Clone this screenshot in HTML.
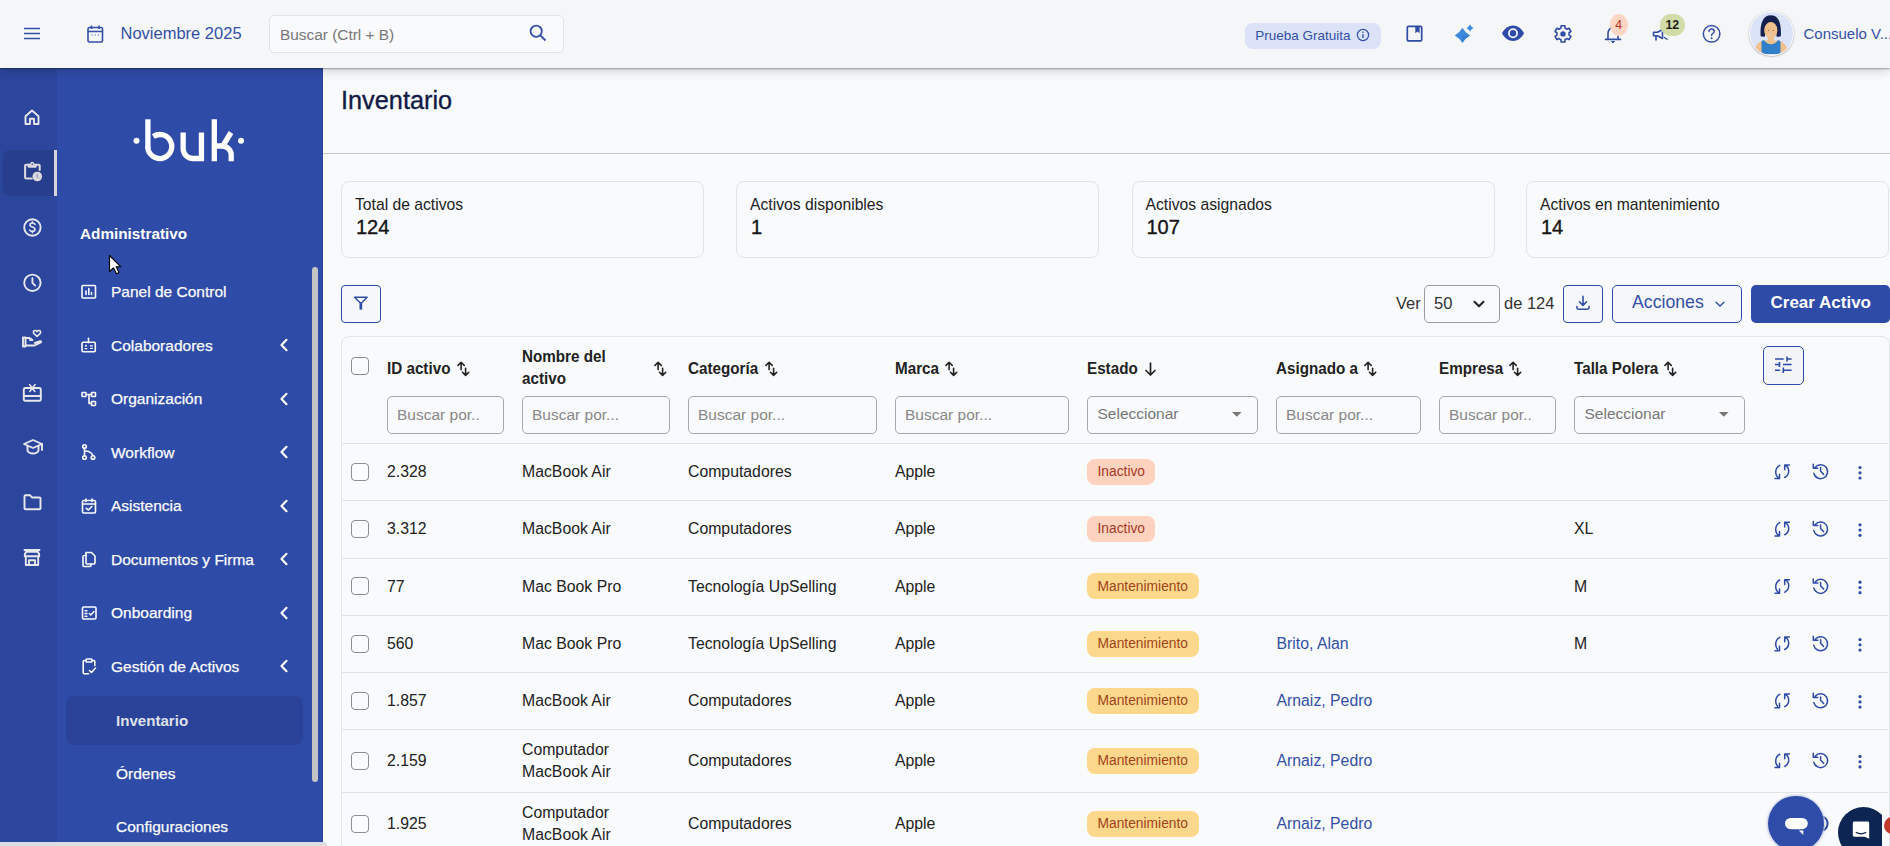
<!DOCTYPE html>
<html><head><meta charset="utf-8"><title>Inventario</title>
<style>
html,body{margin:0;padding:0;}
body{width:1890px;height:846px;overflow:hidden;position:relative;background:#f9fafc;font-family:"Liberation Sans",sans-serif;}
.t{position:absolute;white-space:nowrap;}
</style></head><body>
<div style="position:absolute;left:323px;top:68px;width:1567px;height:778px;background:#f9fafc;"></div>
<div class="t " style="left:341px;top:87.98px;font-size:25.3px;line-height:25.3px;color:#111a45;font-weight:400;-webkit-text-stroke:0.35px #111a45;">Inventario</div>
<div style="position:absolute;left:323px;top:153px;width:1567px;height:1px;background:#c5c6cb;"></div>
<div style="position:absolute;left:341px;top:181px;width:363.3px;height:76.5px;box-sizing:border-box;border:1px solid #e1e3e7;border-radius:8px;background:#f9fafc;"></div>
<div class="t " style="left:355px;top:196.71px;font-size:15.7px;line-height:15.7px;color:#222;font-weight:400;">Total de activos</div>
<div class="t " style="left:356px;top:217.07px;font-size:20px;line-height:20px;color:#151515;font-weight:400;-webkit-text-stroke:0.35px #151515;">124</div>
<div style="position:absolute;left:736px;top:181px;width:363.3px;height:76.5px;box-sizing:border-box;border:1px solid #e1e3e7;border-radius:8px;background:#f9fafc;"></div>
<div class="t " style="left:750px;top:196.71px;font-size:15.7px;line-height:15.7px;color:#222;font-weight:400;">Activos disponibles</div>
<div class="t " style="left:751px;top:217.07px;font-size:20px;line-height:20px;color:#151515;font-weight:400;-webkit-text-stroke:0.35px #151515;">1</div>
<div style="position:absolute;left:1131.5px;top:181px;width:363.3px;height:76.5px;box-sizing:border-box;border:1px solid #e1e3e7;border-radius:8px;background:#f9fafc;"></div>
<div class="t " style="left:1145.5px;top:196.71px;font-size:15.7px;line-height:15.7px;color:#222;font-weight:400;">Activos asignados</div>
<div class="t " style="left:1146.5px;top:217.07px;font-size:20px;line-height:20px;color:#151515;font-weight:400;-webkit-text-stroke:0.35px #151515;">107</div>
<div style="position:absolute;left:1526px;top:181px;width:363.3px;height:76.5px;box-sizing:border-box;border:1px solid #e1e3e7;border-radius:8px;background:#f9fafc;"></div>
<div class="t " style="left:1540px;top:196.71px;font-size:15.7px;line-height:15.7px;color:#222;font-weight:400;">Activos en mantenimiento</div>
<div class="t " style="left:1541px;top:217.07px;font-size:20px;line-height:20px;color:#151515;font-weight:400;-webkit-text-stroke:0.35px #151515;">14</div>
<div style="position:absolute;left:0px;top:0px;width:1890px;height:68px;background:#f5f6f8;box-shadow:0 1px 1.5px rgba(0,0,0,0.3),0 3px 10px rgba(0,0,0,0.16);z-index:5;"></div>
<div style="position:absolute;left:0;top:0;width:1890px;height:68px;z-index:6;">
<svg style="position:absolute;left:24px;top:27px;" width="17" height="13" viewBox="0 0 17 13" fill="none"><path d="M0 1.5H16M0 6.5H16M0 11.5H16" stroke="#3450a6" stroke-width="1.45"/></svg>
<svg style="position:absolute;left:86px;top:24px;" width="19" height="20" viewBox="0 0 19 20" fill="none"><rect x="2" y="3.5" width="14.5" height="14.5" rx="1.5" stroke="#3450a6" stroke-width="1.6"/><path d="M2 7.5H16.5M5.5 1.5V5M13 1.5V5" stroke="#3450a6" stroke-width="1.6"/><path d="M5.5 11H6.5M8.7 11H9.7M11.9 11H12.9" stroke="#3450a6" stroke-width="1.2"/></svg>
<div class="t " style="left:120.5px;top:25.33px;font-size:16.5px;line-height:16.5px;color:#3450a6;font-weight:400;">Noviembre 2025</div>
<div style="position:absolute;left:269px;top:15px;width:295px;height:37.6px;box-sizing:border-box;border:1px solid #e2e3e7;border-radius:5px;background:#f9fafc;"></div>
<div class="t " style="left:280px;top:26.66px;font-size:15.4px;line-height:15.4px;color:#777;font-weight:400;">Buscar (Ctrl + B)</div>
<svg style="position:absolute;left:529px;top:24px;" width="18" height="18" viewBox="0 0 18 18" fill="none"><circle cx="7.2" cy="7.2" r="5.6" stroke="#3450a6" stroke-width="1.8"/><path d="M11.3 11.3L16.5 16.5" stroke="#3450a6" stroke-width="1.9"/></svg>
</div>
<div style="position:absolute;left:0px;top:68px;width:57px;height:778px;background:#2b469c;"></div>
<div style="position:absolute;left:57px;top:68px;width:266px;height:778px;background:#2f4ba8;"></div>
<div style="position:absolute;left:322px;top:68px;width:1px;height:778px;background:#2a44a0;"></div>
<div style="position:absolute;left:0px;top:842px;width:327px;height:4px;background:#dcdde2;border-top-right-radius:3px;"></div>
<div style="position:absolute;left:3px;top:150px;width:51px;height:46px;background:#263e8c;border-radius:7px 0 0 7px;"></div>
<div style="position:absolute;left:54px;top:150px;width:3px;height:46px;background:#d6d6da;"></div>
<svg style="position:absolute;left:22px;top:107px;" width="20" height="20" viewBox="0 0 20 20" fill="none"><path d="M3.5 9.2L10 3.5L16.5 9.2V17H12V11.8H8V17H3.5Z" stroke="#e8e8ec" stroke-width="1.9" stroke-linecap="round" stroke-linejoin="round"/></svg>
<svg style="position:absolute;left:20px;top:160px;" width="25" height="25" viewBox="20 160 25 25" fill="none"><path d="M31.8 178.5H26.1Q25.1 178.5 25.1 177.5V165.8Q25.1 164.8 26.1 164.8H28M36.5 164.8H38.7Q39.7 164.8 39.7 165.8V170" stroke="#dcd9de" stroke-width="2.05" stroke-linecap="round"/><path d="M27.5 163.8H30Q30.5 161.8 32.2 161.8Q34 161.8 34.4 163.8H36.8V166.6Q36.8 167.7 35.8 167.7H28.5Q27.5 167.7 27.5 166.6Z" fill="#dcd9de"/><circle cx="32.3" cy="164.3" r="0.8" fill="#263e8c"/><circle cx="37.3" cy="176.5" r="4.8" fill="#dcd9de"/><path d="M37.1 173.9V176.8L38.6 178.4" stroke="#6d7fb8" stroke-width="0.9"/></svg>
<svg style="position:absolute;left:22px;top:217px;" width="21" height="21" viewBox="0 0 21 21" fill="none"><circle cx="10.4" cy="10.5" r="8.2" stroke="#e8e8ec" stroke-width="1.9" stroke-linecap="round" stroke-linejoin="round"/><path d="M13 7.3C12.6 6.5 11.7 6 10.5 6C9 6 8 6.8 8 8C8 10.6 13 9.5 13 12.3C13 13.5 11.9 14.4 10.4 14.4C9.1 14.4 8.1 13.8 7.7 13M10.4 4.8V6M10.4 14.4V15.8" stroke="#e8e8ec" stroke-width="1.6" stroke-linecap="round"/></svg>
<svg style="position:absolute;left:22px;top:272px;" width="21" height="21" viewBox="0 0 21 21" fill="none"><circle cx="10.4" cy="10.8" r="8.2" stroke="#e8e8ec" stroke-width="1.9" stroke-linecap="round" stroke-linejoin="round"/><path d="M10.4 6.3V10.8L13.2 13.6" stroke="#e8e8ec" stroke-width="1.9" stroke-linecap="round" stroke-linejoin="round"/></svg>
<svg style="position:absolute;left:21px;top:327px;" width="22" height="22" viewBox="0 0 22 22" fill="none"><path d="M2 10.5H4.5V19.5H2Z" stroke="#e8e8ec" stroke-width="1.9" stroke-linecap="round" stroke-linejoin="round"/><path d="M4.5 11H8.5L11.5 13H9M4.5 18.5H13.5L19.8 15.5C20.5 15 20 14 19.2 14.2L13.8 16" stroke="#e8e8ec" stroke-width="1.9" stroke-linecap="round" stroke-linejoin="round"/><path d="M16 9.5L13 6.6C12 5.6 12.2 4 13.5 3.6C14.4 3.3 15.4 3.8 16 4.6C16.6 3.8 17.6 3.3 18.5 3.6C19.8 4 20 5.6 19 6.6Z" stroke="#e8e8ec" stroke-width="1.6" stroke-linejoin="round"/></svg>
<svg style="position:absolute;left:22px;top:382px;" width="21" height="21" viewBox="0 0 21 21" fill="none"><rect x="1.8" y="6" width="17" height="12.8" rx="1.4" stroke="#e8e8ec" stroke-width="1.9" stroke-linecap="round" stroke-linejoin="round"/><path d="M1.8 14H18.8" stroke="#e8e8ec" stroke-width="1.9" stroke-linecap="round" stroke-linejoin="round"/><path d="M10.3 6L7.5 2.6M10.3 6L13.2 2.6M10.3 6L7.8 9.5M10.3 6L12.8 9.5" stroke="#e8e8ec" stroke-width="1.5" stroke-linecap="round"/></svg>
<svg style="position:absolute;left:22px;top:437px;" width="22" height="20" viewBox="0 0 22 20" fill="none"><path d="M2 7L11 3L20 7L11 11Z" stroke="#e8e8ec" stroke-width="1.9" stroke-linecap="round" stroke-linejoin="round"/><path d="M5.5 8.8V13.2C5.5 14.8 8 16.5 11 16.5C14 16.5 16.5 14.8 16.5 13.2V8.8M20 7V13" stroke="#e8e8ec" stroke-width="1.9" stroke-linecap="round" stroke-linejoin="round"/></svg>
<svg style="position:absolute;left:22px;top:492px;" width="21" height="20" viewBox="0 0 21 20" fill="none"><path d="M2.5 4.2C2.5 3.6 3 3.2 3.6 3.2H8L10 5.5H17.4C18 5.5 18.5 6 18.5 6.6V16.3C18.5 16.9 18 17.3 17.4 17.3H3.6C3 17.3 2.5 16.9 2.5 16.3Z" stroke="#e8e8ec" stroke-width="1.9" stroke-linecap="round" stroke-linejoin="round"/></svg>
<svg style="position:absolute;left:22px;top:547px;" width="20" height="21" viewBox="0 0 20 21" fill="none"><path d="M2.5 3H17.5M2.8 7.5L4 4.8H16L17.2 7.5V9.2H2.8Z" stroke="#e8e8ec" stroke-width="1.9" stroke-linecap="round" stroke-linejoin="round"/><path d="M3.8 9.5V18H16.2V9.5M7 18V13.2H13V18" stroke="#e8e8ec" stroke-width="1.9" stroke-linecap="round" stroke-linejoin="round"/></svg>
<svg style="position:absolute;left:120px;top:110px;" width="140" height="60" viewBox="120 110 140 60" fill="none"><g stroke="#fff" stroke-width="5.3" fill="none"><path d="M147.9 119.3V148.5"/><path d="M153.3 136.4A12 12 0 1 1 147.75 146.6"/><path d="M183.15 132.5V148.8A9.7 9.7 0 0 0 192.85 158.5H201.45M201.45 132.5V161.2"/><path d="M214.3 119.3V161.2M216 146H222A9.2 9.2 0 0 1 231.2 155.2V161.2M222.5 146.5L231 132.5"/></g><circle cx="136.5" cy="140.7" r="3" fill="#fff"/><circle cx="241" cy="140.8" r="3" fill="#fff"/></svg>
<div class="t " style="left:80px;top:226.45px;font-size:15.3px;line-height:15.3px;color:#fff;font-weight:700;">Administrativo</div>
<div class="t " style="left:111px;top:284.38px;font-size:15.5px;line-height:15.5px;color:#fbfbfd;font-weight:400;-webkit-text-stroke:0.25px #fbfbfd;">Panel de Control</div>
<div class="t " style="left:111px;top:337.88px;font-size:15.5px;line-height:15.5px;color:#fbfbfd;font-weight:400;-webkit-text-stroke:0.25px #fbfbfd;">Colaboradores</div>
<svg style="position:absolute;left:278px;top:338.0px;" width="12" height="14" viewBox="0 0 12 14" fill="none"><path d="M8.5 1.8L3.5 7L8.5 12.2" stroke="#fbfbfd" stroke-width="2.2" stroke-linecap="round" stroke-linejoin="round"/></svg>
<div class="t " style="left:111px;top:391.38px;font-size:15.5px;line-height:15.5px;color:#fbfbfd;font-weight:400;-webkit-text-stroke:0.25px #fbfbfd;">Organización</div>
<svg style="position:absolute;left:278px;top:391.5px;" width="12" height="14" viewBox="0 0 12 14" fill="none"><path d="M8.5 1.8L3.5 7L8.5 12.2" stroke="#fbfbfd" stroke-width="2.2" stroke-linecap="round" stroke-linejoin="round"/></svg>
<div class="t " style="left:111px;top:444.88px;font-size:15.5px;line-height:15.5px;color:#fbfbfd;font-weight:400;-webkit-text-stroke:0.25px #fbfbfd;">Workflow</div>
<svg style="position:absolute;left:278px;top:445.0px;" width="12" height="14" viewBox="0 0 12 14" fill="none"><path d="M8.5 1.8L3.5 7L8.5 12.2" stroke="#fbfbfd" stroke-width="2.2" stroke-linecap="round" stroke-linejoin="round"/></svg>
<div class="t " style="left:111px;top:498.38px;font-size:15.5px;line-height:15.5px;color:#fbfbfd;font-weight:400;-webkit-text-stroke:0.25px #fbfbfd;">Asistencia</div>
<svg style="position:absolute;left:278px;top:498.5px;" width="12" height="14" viewBox="0 0 12 14" fill="none"><path d="M8.5 1.8L3.5 7L8.5 12.2" stroke="#fbfbfd" stroke-width="2.2" stroke-linecap="round" stroke-linejoin="round"/></svg>
<div class="t " style="left:111px;top:551.88px;font-size:15.5px;line-height:15.5px;color:#fbfbfd;font-weight:400;-webkit-text-stroke:0.25px #fbfbfd;">Documentos y Firma</div>
<svg style="position:absolute;left:278px;top:552.0px;" width="12" height="14" viewBox="0 0 12 14" fill="none"><path d="M8.5 1.8L3.5 7L8.5 12.2" stroke="#fbfbfd" stroke-width="2.2" stroke-linecap="round" stroke-linejoin="round"/></svg>
<div class="t " style="left:111px;top:605.38px;font-size:15.5px;line-height:15.5px;color:#fbfbfd;font-weight:400;-webkit-text-stroke:0.25px #fbfbfd;">Onboarding</div>
<svg style="position:absolute;left:278px;top:605.5px;" width="12" height="14" viewBox="0 0 12 14" fill="none"><path d="M8.5 1.8L3.5 7L8.5 12.2" stroke="#fbfbfd" stroke-width="2.2" stroke-linecap="round" stroke-linejoin="round"/></svg>
<div class="t " style="left:111px;top:658.88px;font-size:15.5px;line-height:15.5px;color:#fbfbfd;font-weight:400;-webkit-text-stroke:0.25px #fbfbfd;">Gestión de Activos</div>
<svg style="position:absolute;left:278px;top:659.0px;" width="12" height="14" viewBox="0 0 12 14" fill="none"><path d="M8.5 1.8L3.5 7L8.5 12.2" stroke="#fbfbfd" stroke-width="2.2" stroke-linecap="round" stroke-linejoin="round"/></svg>
<svg style="position:absolute;left:80px;top:283px;" width="18" height="18" viewBox="0 0 18 18" fill="none"><rect x="2" y="2.5" width="13.5" height="12.5" rx="1" stroke="#fbfbfd" stroke-width="1.6" stroke-linecap="round" stroke-linejoin="round"/><path d="M6 11.5V8M8.8 11.5V5.5M11.5 11.5V9.5" stroke="#fbfbfd" stroke-width="1.6" stroke-linecap="round" stroke-linejoin="round"/></svg>
<svg style="position:absolute;left:80px;top:336px;" width="18" height="18" viewBox="0 0 18 18" fill="none"><rect x="2" y="6.2" width="13.3" height="9.6" rx="1.2" stroke="#fbfbfd" stroke-width="1.6" stroke-linecap="round" stroke-linejoin="round"/><path d="M8.5 2.3V6.8" stroke="#fbfbfd" stroke-width="1.6" stroke-linecap="round" stroke-linejoin="round"/><circle cx="5.9" cy="9.7" r="1" fill="#fbfbfd"/><path d="M4.5 12.6H7.3M10 9.9H12.8M10 12.3H12.8" stroke="#fbfbfd" stroke-width="1.3"/></svg>
<svg style="position:absolute;left:80px;top:390px;" width="18" height="18" viewBox="0 0 18 18" fill="none"><rect x="2" y="2.5" width="4" height="4" rx="0.6" stroke="#fbfbfd" stroke-width="1.6" stroke-linecap="round" stroke-linejoin="round"/><rect x="11.5" y="2.5" width="4" height="4" rx="0.6" stroke="#fbfbfd" stroke-width="1.6" stroke-linecap="round" stroke-linejoin="round"/><rect x="11.5" y="11.5" width="4" height="4" rx="0.6" stroke="#fbfbfd" stroke-width="1.6" stroke-linecap="round" stroke-linejoin="round"/><path d="M6 4.5H11.5M9 4.5V13.5H11.5" stroke="#fbfbfd" stroke-width="1.6" stroke-linecap="round" stroke-linejoin="round"/></svg>
<svg style="position:absolute;left:80px;top:443px;" width="18" height="18" viewBox="0 0 18 18" fill="none"><circle cx="4.5" cy="3.5" r="1.8" stroke="#fbfbfd" stroke-width="1.6" stroke-linecap="round" stroke-linejoin="round"/><circle cx="4.5" cy="14.5" r="1.8" stroke="#fbfbfd" stroke-width="1.6" stroke-linecap="round" stroke-linejoin="round"/><circle cx="13" cy="14.5" r="1.8" stroke="#fbfbfd" stroke-width="1.6" stroke-linecap="round" stroke-linejoin="round"/><path d="M4.5 5.3V12.7M4.5 8.5C6 7.5 11 8 13 12.5" stroke="#fbfbfd" stroke-width="1.6" stroke-linecap="round" stroke-linejoin="round"/></svg>
<svg style="position:absolute;left:80px;top:497px;" width="18" height="18" viewBox="0 0 18 18" fill="none"><rect x="2.5" y="3.5" width="13" height="12.5" rx="1.2" stroke="#fbfbfd" stroke-width="1.6" stroke-linecap="round" stroke-linejoin="round"/><path d="M2.5 7H15.5M6 2V4.5M12 2V4.5M6.3 11.3L8.3 13L11.8 9.5" stroke="#fbfbfd" stroke-width="1.6" stroke-linecap="round" stroke-linejoin="round"/></svg>
<svg style="position:absolute;left:80px;top:550px;" width="18" height="18" viewBox="0 0 18 18" fill="none"><path d="M6 5.5H4C3.4 5.5 3 5.9 3 6.5V15.5C3 16.1 3.4 16.5 4 16.5H10C10.6 16.5 11 16.1 11 15.5V14" stroke="#fbfbfd" stroke-width="1.6" stroke-linecap="round" stroke-linejoin="round"/><path d="M6 2.5H11.5L15 6V13C15 13.6 14.6 14 14 14H7C6.4 14 6 13.6 6 13Z" stroke="#fbfbfd" stroke-width="1.6" stroke-linecap="round" stroke-linejoin="round"/></svg>
<svg style="position:absolute;left:80px;top:604px;" width="18" height="18" viewBox="0 0 18 18" fill="none"><rect x="2.5" y="3" width="13.5" height="12" rx="1.2" stroke="#fbfbfd" stroke-width="1.6" stroke-linecap="round" stroke-linejoin="round"/><path d="M5 6.8H7M5 9.5H7M5 12.2H7M9.3 9.5L10.8 11L14 7.5" stroke="#fbfbfd" stroke-width="1.4" stroke-linecap="round"/></svg>
<svg style="position:absolute;left:80px;top:657px;" width="18" height="18" viewBox="0 0 18 18" fill="none"><path d="M6 3.5H4.2C3.6 3.5 3.2 3.9 3.2 4.5V15.8C3.2 16.4 3.6 16.8 4.2 16.8H8.5M12 3.5H13.8C14.4 3.5 14.8 3.9 14.8 4.5V8.5" stroke="#fbfbfd" stroke-width="1.6" stroke-linecap="round" stroke-linejoin="round"/><rect x="6" y="2" width="6" height="3" rx="0.8" stroke="#fbfbfd" stroke-width="1.6" stroke-linecap="round" stroke-linejoin="round"/><path d="M9.5 13.5L11.5 15.5L15.5 11" stroke="#fbfbfd" stroke-width="1.6" stroke-linecap="round" stroke-linejoin="round"/></svg>
<div style="position:absolute;left:66px;top:696px;width:237px;height:49px;background:#2a4399;border-radius:8px;"></div>
<div class="t " style="left:116px;top:712.51px;font-size:15.1px;line-height:15.1px;color:#dfe1ea;font-weight:700;">Inventario</div>
<div class="t " style="left:116px;top:766.08px;font-size:15.5px;line-height:15.5px;color:#fbfbfd;font-weight:400;-webkit-text-stroke:0.25px #fbfbfd;">Órdenes</div>
<div class="t " style="left:116px;top:818.98px;font-size:15.5px;line-height:15.5px;color:#fbfbfd;font-weight:400;-webkit-text-stroke:0.25px #fbfbfd;">Configuraciones</div>
<div style="position:absolute;left:312px;top:267px;width:6px;height:515px;background:#c4c4c7;border-radius:3px;"></div>
<div style="position:absolute;left:341px;top:285px;width:40px;height:38px;box-sizing:border-box;border:1px solid #2f4ba8;border-radius:4px;background:#f6f7fa;"></div>
<svg style="position:absolute;left:351px;top:294px;" width="20" height="20" viewBox="0 0 20 20" fill="none"><path d="M3.5 3.2H16.2L9.85 9.6Z" stroke="#2f4ba8" stroke-width="1.35" stroke-linejoin="round"/><path d="M8.5 9.3H11.2V15.6H8.5Z" fill="#2f4ba8"/></svg>
<div class="t " style="left:1396px;top:294.63px;font-size:16.5px;line-height:16.5px;color:#333;font-weight:400;">Ver</div>
<div style="position:absolute;left:1424px;top:285px;width:76px;height:38px;box-sizing:border-box;border:1px solid #9a9a9a;border-radius:5px;background:#f9fafc;"></div>
<div class="t " style="left:1434px;top:294.63px;font-size:16.5px;line-height:16.5px;color:#333;font-weight:400;">50</div>
<svg style="position:absolute;left:1472px;top:297px;" width="14" height="14" viewBox="0 0 14 14" fill="none"><path d="M2.5 4.8L7 9.2L11.5 4.8" stroke="#222" stroke-width="2" stroke-linecap="round" stroke-linejoin="round"/></svg>
<div class="t " style="left:1504px;top:294.63px;font-size:16.5px;line-height:16.5px;color:#333;font-weight:400;">de 124</div>
<div style="position:absolute;left:1563px;top:285px;width:40px;height:38px;box-sizing:border-box;border:1px solid #2f4ba8;border-radius:4px;background:#f6f7fa;"></div>
<svg style="position:absolute;left:1573px;top:294px;" width="20" height="20" viewBox="0 0 20 20" fill="none"><path d="M10 2.3V11.3M6.4 7.8L10 11.4L13.6 7.8M3.9 12.6V13.6Q3.9 15.2 5.5 15.2H14.5Q16.1 15.2 16.1 13.6V12.6" stroke="#2f4ba8" stroke-width="1.55" stroke-linecap="round" stroke-linejoin="round"/></svg>
<div style="position:absolute;left:1612px;top:285px;width:130px;height:38px;box-sizing:border-box;border:1px solid #2f4ba8;border-radius:5px;background:#f6f7fa;"></div>
<div class="t " style="left:1632px;top:293.81px;font-size:17.7px;line-height:17.7px;color:#3450a6;font-weight:400;">Acciones</div>
<svg style="position:absolute;left:1713px;top:297px;" width="14" height="14" viewBox="0 0 14 14" fill="none"><path d="M3 5.2L7 9L11 5.2" stroke="#3450a6" stroke-width="1.5" stroke-linecap="round" stroke-linejoin="round"/></svg>
<div style="position:absolute;left:1751px;top:285px;width:139px;height:38px;background:#2f4ba8;border-radius:5px;"></div>
<div class="t " style="left:1770.5px;top:294.41px;font-size:17px;line-height:17px;color:#fff;font-weight:700;">Crear Activo</div>
<div style="position:absolute;left:341px;top:336px;width:1548.5px;height:600px;box-sizing:border-box;border:1px solid #e3e5e9;border-radius:8px;background:#f9fafc;"></div>
<div style="position:absolute;left:351px;top:357px;width:18px;height:18px;box-sizing:border-box;border:1.3px solid #8e8e8e;border-radius:4px;background:#fafbfc;"></div>
<div class="t " style="left:387px;top:360.18px;font-size:16.2px;line-height:16.2px;color:#222;font-weight:700;transform:scaleX(0.94);transform-origin:0 0;">ID activo</div>
<svg style="position:absolute;left:457.4px;top:361px;" width="14" height="16" viewBox="0 0 14 16" fill="none"><path d="M4.1 8.6V1.4M1 4.4L4.1 1.3L7.2 4.4M8.6 7.2V14.4M5.5 11.3L8.6 14.4L11.7 11.3" stroke="#222" stroke-width="1.6" stroke-linecap="round" stroke-linejoin="round"/></svg>
<div class="t " style="left:522px;top:348.48px;font-size:16.2px;line-height:16.2px;color:#222;font-weight:700;transform:scaleX(0.94);transform-origin:0 0;">Nombre del</div>
<div class="t " style="left:522px;top:370.28px;font-size:16.2px;line-height:16.2px;color:#222;font-weight:700;transform:scaleX(0.94);transform-origin:0 0;">activo</div>
<svg style="position:absolute;left:654.2px;top:361px;" width="14" height="16" viewBox="0 0 14 16" fill="none"><path d="M4.1 8.6V1.4M1 4.4L4.1 1.3L7.2 4.4M8.6 7.2V14.4M5.5 11.3L8.6 14.4L11.7 11.3" stroke="#222" stroke-width="1.6" stroke-linecap="round" stroke-linejoin="round"/></svg>
<div class="t " style="left:688px;top:360.18px;font-size:16.2px;line-height:16.2px;color:#222;font-weight:700;transform:scaleX(0.94);transform-origin:0 0;">Categoría</div>
<svg style="position:absolute;left:764.8px;top:361px;" width="14" height="16" viewBox="0 0 14 16" fill="none"><path d="M4.1 8.6V1.4M1 4.4L4.1 1.3L7.2 4.4M8.6 7.2V14.4M5.5 11.3L8.6 14.4L11.7 11.3" stroke="#222" stroke-width="1.6" stroke-linecap="round" stroke-linejoin="round"/></svg>
<div class="t " style="left:895px;top:360.18px;font-size:16.2px;line-height:16.2px;color:#222;font-weight:700;transform:scaleX(0.94);transform-origin:0 0;">Marca</div>
<svg style="position:absolute;left:944.7px;top:361px;" width="14" height="16" viewBox="0 0 14 16" fill="none"><path d="M4.1 8.6V1.4M1 4.4L4.1 1.3L7.2 4.4M8.6 7.2V14.4M5.5 11.3L8.6 14.4L11.7 11.3" stroke="#222" stroke-width="1.6" stroke-linecap="round" stroke-linejoin="round"/></svg>
<div class="t " style="left:1087px;top:360.18px;font-size:16.2px;line-height:16.2px;color:#222;font-weight:700;transform:scaleX(0.94);transform-origin:0 0;">Estado</div>
<svg style="position:absolute;left:1143px;top:361px;" width="16" height="16" viewBox="0 0 16 16" fill="none"><path d="M7.5 2V14M3 9.5L7.5 14L12 9.5" stroke="#222" stroke-width="1.7" stroke-linecap="round" stroke-linejoin="round"/></svg>
<div class="t " style="left:1276px;top:360.18px;font-size:16.2px;line-height:16.2px;color:#222;font-weight:700;transform:scaleX(0.94);transform-origin:0 0;">Asignado a</div>
<svg style="position:absolute;left:1364px;top:361px;" width="14" height="16" viewBox="0 0 14 16" fill="none"><path d="M4.1 8.6V1.4M1 4.4L4.1 1.3L7.2 4.4M8.6 7.2V14.4M5.5 11.3L8.6 14.4L11.7 11.3" stroke="#222" stroke-width="1.6" stroke-linecap="round" stroke-linejoin="round"/></svg>
<div class="t " style="left:1439px;top:360.18px;font-size:16.2px;line-height:16.2px;color:#222;font-weight:700;transform:scaleX(0.94);transform-origin:0 0;">Empresa</div>
<svg style="position:absolute;left:1508.7px;top:361px;" width="14" height="16" viewBox="0 0 14 16" fill="none"><path d="M4.1 8.6V1.4M1 4.4L4.1 1.3L7.2 4.4M8.6 7.2V14.4M5.5 11.3L8.6 14.4L11.7 11.3" stroke="#222" stroke-width="1.6" stroke-linecap="round" stroke-linejoin="round"/></svg>
<div class="t " style="left:1574px;top:360.18px;font-size:16.2px;line-height:16.2px;color:#222;font-weight:700;transform:scaleX(0.94);transform-origin:0 0;">Talla Polera</div>
<svg style="position:absolute;left:1663.6px;top:361px;" width="14" height="16" viewBox="0 0 14 16" fill="none"><path d="M4.1 8.6V1.4M1 4.4L4.1 1.3L7.2 4.4M8.6 7.2V14.4M5.5 11.3L8.6 14.4L11.7 11.3" stroke="#222" stroke-width="1.6" stroke-linecap="round" stroke-linejoin="round"/></svg>
<div style="position:absolute;left:387px;top:396px;width:117px;height:37.5px;box-sizing:border-box;border:1px solid #a8a8a8;border-radius:5px;background:#f9fafc;overflow:hidden;"></div>
<div class="t" style="left:397px;top:407.38px;width:99px;overflow:hidden;font-size:15.5px;line-height:15.5px;color:#888;">Buscar por..</div>
<div style="position:absolute;left:522px;top:396px;width:148px;height:37.5px;box-sizing:border-box;border:1px solid #a8a8a8;border-radius:5px;background:#f9fafc;overflow:hidden;"></div>
<div class="t" style="left:532px;top:407.38px;width:130px;overflow:hidden;font-size:15.5px;line-height:15.5px;color:#888;">Buscar por...</div>
<div style="position:absolute;left:688px;top:396px;width:189px;height:37.5px;box-sizing:border-box;border:1px solid #a8a8a8;border-radius:5px;background:#f9fafc;overflow:hidden;"></div>
<div class="t" style="left:698px;top:407.38px;width:171px;overflow:hidden;font-size:15.5px;line-height:15.5px;color:#888;">Buscar por...</div>
<div style="position:absolute;left:895px;top:396px;width:174px;height:37.5px;box-sizing:border-box;border:1px solid #a8a8a8;border-radius:5px;background:#f9fafc;overflow:hidden;"></div>
<div class="t" style="left:905px;top:407.38px;width:156px;overflow:hidden;font-size:15.5px;line-height:15.5px;color:#888;">Buscar por...</div>
<div style="position:absolute;left:1087px;top:396px;width:171px;height:37.5px;box-sizing:border-box;border:1px solid #a8a8a8;border-radius:5px;background:#f9fafc;overflow:hidden;"></div>
<div class="t " style="left:1097.5px;top:406.38px;font-size:15.5px;line-height:15.5px;color:#777;font-weight:400;">Seleccionar</div>
<svg style="position:absolute;left:1231px;top:410px;" width="12" height="8" viewBox="0 0 12 8" fill="none"><path d="M1 2H10.6L5.8 6.8Z" fill="#777"/></svg>
<div style="position:absolute;left:1276px;top:396px;width:145px;height:37.5px;box-sizing:border-box;border:1px solid #a8a8a8;border-radius:5px;background:#f9fafc;overflow:hidden;"></div>
<div class="t" style="left:1286px;top:407.38px;width:127px;overflow:hidden;font-size:15.5px;line-height:15.5px;color:#888;">Buscar por...</div>
<div style="position:absolute;left:1439px;top:396px;width:117px;height:37.5px;box-sizing:border-box;border:1px solid #a8a8a8;border-radius:5px;background:#f9fafc;overflow:hidden;"></div>
<div class="t" style="left:1449px;top:407.38px;width:99px;overflow:hidden;font-size:15.5px;line-height:15.5px;color:#888;">Buscar por..</div>
<div style="position:absolute;left:1574px;top:396px;width:171px;height:37.5px;box-sizing:border-box;border:1px solid #a8a8a8;border-radius:5px;background:#f9fafc;overflow:hidden;"></div>
<div class="t " style="left:1584.5px;top:406.38px;font-size:15.5px;line-height:15.5px;color:#777;font-weight:400;">Seleccionar</div>
<svg style="position:absolute;left:1718px;top:410px;" width="12" height="8" viewBox="0 0 12 8" fill="none"><path d="M1 2H10.6L5.8 6.8Z" fill="#777"/></svg>
<div style="position:absolute;left:1763px;top:346px;width:41px;height:39px;box-sizing:border-box;border:1.3px solid #2f4ba8;border-radius:5px;background:#f3f4f8;"></div>
<svg style="position:absolute;left:1773px;top:354px;" width="22" height="22" viewBox="0 0 22 22" fill="none"><path d="M2 5H10.7M14 5H18.6M14 2.5V7.5M2 10.5H6.5M6.5 8V13M10 10.5H18.6M2 16.3H7.1M10.3 16.3H18.6M10.3 13.5V19" stroke="#2f4ba8" stroke-width="1.6"/></svg>
<div style="position:absolute;left:342px;top:443px;width:1546px;height:1px;background:#e1e3e7;"></div>
<div style="position:absolute;left:342px;top:500px;width:1546px;height:1px;background:#e1e3e7;"></div>
<div style="position:absolute;left:342px;top:558px;width:1546px;height:1px;background:#e1e3e7;"></div>
<div style="position:absolute;left:342px;top:615px;width:1546px;height:1px;background:#e1e3e7;"></div>
<div style="position:absolute;left:342px;top:672px;width:1546px;height:1px;background:#e1e3e7;"></div>
<div style="position:absolute;left:342px;top:729px;width:1546px;height:1px;background:#e1e3e7;"></div>
<div style="position:absolute;left:342px;top:792px;width:1546px;height:1px;background:#e1e3e7;"></div>
<div style="position:absolute;left:351px;top:462.75px;width:18px;height:18px;box-sizing:border-box;border:1.3px solid #8e8e8e;border-radius:4px;background:#fafbfc;"></div>
<div class="t " style="left:387px;top:463.87px;font-size:15.8px;line-height:15.8px;color:#222;font-weight:400;">2.328</div>
<div class="t " style="left:522px;top:463.87px;font-size:15.8px;line-height:15.8px;color:#222;font-weight:400;">MacBook Air</div>
<div class="t " style="left:688px;top:463.87px;font-size:15.8px;line-height:15.8px;color:#222;font-weight:400;">Computadores</div>
<div class="t " style="left:895px;top:463.87px;font-size:15.8px;line-height:15.8px;color:#222;font-weight:400;">Apple</div>
<div style="position:absolute;left:1087px;top:458.75px;width:67.5px;height:26px;background:#fdd3c0;border-radius:8px;"></div>
<div class="t " style="left:1097.5px;top:465.07px;font-size:13.8px;line-height:13.8px;color:#a43a1e;font-weight:400;">Inactivo</div>
<svg style="position:absolute;left:1771px;top:460px;" width="22" height="22" viewBox="0 0 22 22" fill="none"><g transform="translate(0 0.00)"><path d="M8.7 5.3A7.7 7.7 0 0 0 8.4 18.6M8.5 14.2V18.6H4M13.7 17.5A7 7 0 0 0 14 5M13.7 9.7V5H18.4" stroke="#2f4ba8" stroke-width="1.5" stroke-linecap="round" stroke-linejoin="round"/></g></svg>
<svg style="position:absolute;left:1810px;top:460px;" width="22" height="22" viewBox="0 0 22 22" fill="none"><g transform="translate(0 0.00)"><path d="M3.8 13.3A7 7 0 1 0 5.2 7.2M3.3 4.2V8.3H7.8" stroke="#2f4ba8" stroke-width="1.5" stroke-linecap="round" stroke-linejoin="round"/><path d="M10.6 7.8V11.1L13.6 14.4" stroke="#2f4ba8" stroke-width="1.5" stroke-linecap="round" stroke-linejoin="round"/></g></svg>
<svg style="position:absolute;left:1855px;top:460px;" width="10" height="22" viewBox="0 0 10 22" fill="none"><circle cx="5" cy="7.50" r="1.6" fill="#2f4ba8"/><circle cx="5" cy="12.80" r="1.6" fill="#2f4ba8"/><circle cx="5" cy="18.00" r="1.6" fill="#2f4ba8"/></svg>
<div style="position:absolute;left:351px;top:520.05px;width:18px;height:18px;box-sizing:border-box;border:1.3px solid #8e8e8e;border-radius:4px;background:#fafbfc;"></div>
<div class="t " style="left:387px;top:521.17px;font-size:15.8px;line-height:15.8px;color:#222;font-weight:400;">3.312</div>
<div class="t " style="left:522px;top:521.17px;font-size:15.8px;line-height:15.8px;color:#222;font-weight:400;">MacBook Air</div>
<div class="t " style="left:688px;top:521.17px;font-size:15.8px;line-height:15.8px;color:#222;font-weight:400;">Computadores</div>
<div class="t " style="left:895px;top:521.17px;font-size:15.8px;line-height:15.8px;color:#222;font-weight:400;">Apple</div>
<div style="position:absolute;left:1087px;top:516.05px;width:67.5px;height:26px;background:#fdd3c0;border-radius:8px;"></div>
<div class="t " style="left:1097.5px;top:522.37px;font-size:13.8px;line-height:13.8px;color:#a43a1e;font-weight:400;">Inactivo</div>
<div class="t " style="left:1574px;top:521.17px;font-size:15.8px;line-height:15.8px;color:#222;font-weight:400;">XL</div>
<svg style="position:absolute;left:1771px;top:518px;" width="22" height="22" viewBox="0 0 22 22" fill="none"><g transform="translate(0 -0.70)"><path d="M8.7 5.3A7.7 7.7 0 0 0 8.4 18.6M8.5 14.2V18.6H4M13.7 17.5A7 7 0 0 0 14 5M13.7 9.7V5H18.4" stroke="#2f4ba8" stroke-width="1.5" stroke-linecap="round" stroke-linejoin="round"/></g></svg>
<svg style="position:absolute;left:1810px;top:518px;" width="22" height="22" viewBox="0 0 22 22" fill="none"><g transform="translate(0 -0.70)"><path d="M3.8 13.3A7 7 0 1 0 5.2 7.2M3.3 4.2V8.3H7.8" stroke="#2f4ba8" stroke-width="1.5" stroke-linecap="round" stroke-linejoin="round"/><path d="M10.6 7.8V11.1L13.6 14.4" stroke="#2f4ba8" stroke-width="1.5" stroke-linecap="round" stroke-linejoin="round"/></g></svg>
<svg style="position:absolute;left:1855px;top:518px;" width="10" height="22" viewBox="0 0 10 22" fill="none"><circle cx="5" cy="6.80" r="1.6" fill="#2f4ba8"/><circle cx="5" cy="12.10" r="1.6" fill="#2f4ba8"/><circle cx="5" cy="17.30" r="1.6" fill="#2f4ba8"/></svg>
<div style="position:absolute;left:351px;top:577.45px;width:18px;height:18px;box-sizing:border-box;border:1.3px solid #8e8e8e;border-radius:4px;background:#fafbfc;"></div>
<div class="t " style="left:387px;top:578.57px;font-size:15.8px;line-height:15.8px;color:#222;font-weight:400;">77</div>
<div class="t " style="left:522px;top:578.57px;font-size:15.8px;line-height:15.8px;color:#222;font-weight:400;">Mac Book Pro</div>
<div class="t " style="left:688px;top:578.57px;font-size:15.8px;line-height:15.8px;color:#222;font-weight:400;">Tecnología UpSelling</div>
<div class="t " style="left:895px;top:578.57px;font-size:15.8px;line-height:15.8px;color:#222;font-weight:400;">Apple</div>
<div style="position:absolute;left:1087px;top:573.45px;width:112px;height:26px;background:#fcd88c;border-radius:8px;"></div>
<div class="t " style="left:1097.5px;top:579.77px;font-size:13.8px;line-height:13.8px;color:#a3431c;font-weight:400;">Mantenimiento</div>
<div class="t " style="left:1574px;top:578.57px;font-size:15.8px;line-height:15.8px;color:#222;font-weight:400;">M</div>
<svg style="position:absolute;left:1771px;top:575px;" width="22" height="22" viewBox="0 0 22 22" fill="none"><g transform="translate(0 -0.30)"><path d="M8.7 5.3A7.7 7.7 0 0 0 8.4 18.6M8.5 14.2V18.6H4M13.7 17.5A7 7 0 0 0 14 5M13.7 9.7V5H18.4" stroke="#2f4ba8" stroke-width="1.5" stroke-linecap="round" stroke-linejoin="round"/></g></svg>
<svg style="position:absolute;left:1810px;top:575px;" width="22" height="22" viewBox="0 0 22 22" fill="none"><g transform="translate(0 -0.30)"><path d="M3.8 13.3A7 7 0 1 0 5.2 7.2M3.3 4.2V8.3H7.8" stroke="#2f4ba8" stroke-width="1.5" stroke-linecap="round" stroke-linejoin="round"/><path d="M10.6 7.8V11.1L13.6 14.4" stroke="#2f4ba8" stroke-width="1.5" stroke-linecap="round" stroke-linejoin="round"/></g></svg>
<svg style="position:absolute;left:1855px;top:575px;" width="10" height="22" viewBox="0 0 10 22" fill="none"><circle cx="5" cy="7.20" r="1.6" fill="#2f4ba8"/><circle cx="5" cy="12.50" r="1.6" fill="#2f4ba8"/><circle cx="5" cy="17.70" r="1.6" fill="#2f4ba8"/></svg>
<div style="position:absolute;left:351px;top:634.8px;width:18px;height:18px;box-sizing:border-box;border:1.3px solid #8e8e8e;border-radius:4px;background:#fafbfc;"></div>
<div class="t " style="left:387px;top:635.92px;font-size:15.8px;line-height:15.8px;color:#222;font-weight:400;">560</div>
<div class="t " style="left:522px;top:635.92px;font-size:15.8px;line-height:15.8px;color:#222;font-weight:400;">Mac Book Pro</div>
<div class="t " style="left:688px;top:635.92px;font-size:15.8px;line-height:15.8px;color:#222;font-weight:400;">Tecnología UpSelling</div>
<div class="t " style="left:895px;top:635.92px;font-size:15.8px;line-height:15.8px;color:#222;font-weight:400;">Apple</div>
<div style="position:absolute;left:1087px;top:630.8px;width:112px;height:26px;background:#fcd88c;border-radius:8px;"></div>
<div class="t " style="left:1097.5px;top:637.12px;font-size:13.8px;line-height:13.8px;color:#a3431c;font-weight:400;">Mantenimiento</div>
<div class="t " style="left:1276.5px;top:635.92px;font-size:15.8px;line-height:15.8px;color:#3450a6;font-weight:400;">Brito, Alan</div>
<div class="t " style="left:1574px;top:635.92px;font-size:15.8px;line-height:15.8px;color:#222;font-weight:400;">M</div>
<svg style="position:absolute;left:1771px;top:632px;" width="22" height="22" viewBox="0 0 22 22" fill="none"><g transform="translate(0 0.05)"><path d="M8.7 5.3A7.7 7.7 0 0 0 8.4 18.6M8.5 14.2V18.6H4M13.7 17.5A7 7 0 0 0 14 5M13.7 9.7V5H18.4" stroke="#2f4ba8" stroke-width="1.5" stroke-linecap="round" stroke-linejoin="round"/></g></svg>
<svg style="position:absolute;left:1810px;top:632px;" width="22" height="22" viewBox="0 0 22 22" fill="none"><g transform="translate(0 0.05)"><path d="M3.8 13.3A7 7 0 1 0 5.2 7.2M3.3 4.2V8.3H7.8" stroke="#2f4ba8" stroke-width="1.5" stroke-linecap="round" stroke-linejoin="round"/><path d="M10.6 7.8V11.1L13.6 14.4" stroke="#2f4ba8" stroke-width="1.5" stroke-linecap="round" stroke-linejoin="round"/></g></svg>
<svg style="position:absolute;left:1855px;top:632px;" width="10" height="22" viewBox="0 0 10 22" fill="none"><circle cx="5" cy="7.55" r="1.6" fill="#2f4ba8"/><circle cx="5" cy="12.85" r="1.6" fill="#2f4ba8"/><circle cx="5" cy="18.05" r="1.6" fill="#2f4ba8"/></svg>
<div style="position:absolute;left:351px;top:691.85px;width:18px;height:18px;box-sizing:border-box;border:1.3px solid #8e8e8e;border-radius:4px;background:#fafbfc;"></div>
<div class="t " style="left:387px;top:692.97px;font-size:15.8px;line-height:15.8px;color:#222;font-weight:400;">1.857</div>
<div class="t " style="left:522px;top:692.97px;font-size:15.8px;line-height:15.8px;color:#222;font-weight:400;">MacBook Air</div>
<div class="t " style="left:688px;top:692.97px;font-size:15.8px;line-height:15.8px;color:#222;font-weight:400;">Computadores</div>
<div class="t " style="left:895px;top:692.97px;font-size:15.8px;line-height:15.8px;color:#222;font-weight:400;">Apple</div>
<div style="position:absolute;left:1087px;top:687.85px;width:112px;height:26px;background:#fcd88c;border-radius:8px;"></div>
<div class="t " style="left:1097.5px;top:694.17px;font-size:13.8px;line-height:13.8px;color:#a3431c;font-weight:400;">Mantenimiento</div>
<div class="t " style="left:1276.5px;top:692.97px;font-size:15.8px;line-height:15.8px;color:#3450a6;font-weight:400;">Arnaiz, Pedro</div>
<svg style="position:absolute;left:1771px;top:689px;" width="22" height="22" viewBox="0 0 22 22" fill="none"><g transform="translate(0 0.10)"><path d="M8.7 5.3A7.7 7.7 0 0 0 8.4 18.6M8.5 14.2V18.6H4M13.7 17.5A7 7 0 0 0 14 5M13.7 9.7V5H18.4" stroke="#2f4ba8" stroke-width="1.5" stroke-linecap="round" stroke-linejoin="round"/></g></svg>
<svg style="position:absolute;left:1810px;top:689px;" width="22" height="22" viewBox="0 0 22 22" fill="none"><g transform="translate(0 0.10)"><path d="M3.8 13.3A7 7 0 1 0 5.2 7.2M3.3 4.2V8.3H7.8" stroke="#2f4ba8" stroke-width="1.5" stroke-linecap="round" stroke-linejoin="round"/><path d="M10.6 7.8V11.1L13.6 14.4" stroke="#2f4ba8" stroke-width="1.5" stroke-linecap="round" stroke-linejoin="round"/></g></svg>
<svg style="position:absolute;left:1855px;top:689px;" width="10" height="22" viewBox="0 0 10 22" fill="none"><circle cx="5" cy="7.60" r="1.6" fill="#2f4ba8"/><circle cx="5" cy="12.90" r="1.6" fill="#2f4ba8"/><circle cx="5" cy="18.10" r="1.6" fill="#2f4ba8"/></svg>
<div style="position:absolute;left:351px;top:751.7px;width:18px;height:18px;box-sizing:border-box;border:1.3px solid #8e8e8e;border-radius:4px;background:#fafbfc;"></div>
<div class="t " style="left:387px;top:752.82px;font-size:15.8px;line-height:15.8px;color:#222;font-weight:400;">2.159</div>
<div class="t " style="left:522px;top:741.82px;font-size:15.8px;line-height:15.8px;color:#222;font-weight:400;">Computador</div>
<div class="t " style="left:522px;top:763.82px;font-size:15.8px;line-height:15.8px;color:#222;font-weight:400;">MacBook Air</div>
<div class="t " style="left:688px;top:752.82px;font-size:15.8px;line-height:15.8px;color:#222;font-weight:400;">Computadores</div>
<div class="t " style="left:895px;top:752.82px;font-size:15.8px;line-height:15.8px;color:#222;font-weight:400;">Apple</div>
<div style="position:absolute;left:1087px;top:747.7px;width:112px;height:26px;background:#fcd88c;border-radius:8px;"></div>
<div class="t " style="left:1097.5px;top:754.02px;font-size:13.8px;line-height:13.8px;color:#a3431c;font-weight:400;">Mantenimiento</div>
<div class="t " style="left:1276.5px;top:752.82px;font-size:15.8px;line-height:15.8px;color:#3450a6;font-weight:400;">Arnaiz, Pedro</div>
<svg style="position:absolute;left:1771px;top:749px;" width="22" height="22" viewBox="0 0 22 22" fill="none"><g transform="translate(0 -0.05)"><path d="M8.7 5.3A7.7 7.7 0 0 0 8.4 18.6M8.5 14.2V18.6H4M13.7 17.5A7 7 0 0 0 14 5M13.7 9.7V5H18.4" stroke="#2f4ba8" stroke-width="1.5" stroke-linecap="round" stroke-linejoin="round"/></g></svg>
<svg style="position:absolute;left:1810px;top:749px;" width="22" height="22" viewBox="0 0 22 22" fill="none"><g transform="translate(0 -0.05)"><path d="M3.8 13.3A7 7 0 1 0 5.2 7.2M3.3 4.2V8.3H7.8" stroke="#2f4ba8" stroke-width="1.5" stroke-linecap="round" stroke-linejoin="round"/><path d="M10.6 7.8V11.1L13.6 14.4" stroke="#2f4ba8" stroke-width="1.5" stroke-linecap="round" stroke-linejoin="round"/></g></svg>
<svg style="position:absolute;left:1855px;top:749px;" width="10" height="22" viewBox="0 0 10 22" fill="none"><circle cx="5" cy="7.45" r="1.6" fill="#2f4ba8"/><circle cx="5" cy="12.75" r="1.6" fill="#2f4ba8"/><circle cx="5" cy="17.95" r="1.6" fill="#2f4ba8"/></svg>
<div style="position:absolute;left:351px;top:814.5px;width:18px;height:18px;box-sizing:border-box;border:1.3px solid #8e8e8e;border-radius:4px;background:#fafbfc;"></div>
<div class="t " style="left:387px;top:815.62px;font-size:15.8px;line-height:15.8px;color:#222;font-weight:400;">1.925</div>
<div class="t " style="left:522px;top:804.62px;font-size:15.8px;line-height:15.8px;color:#222;font-weight:400;">Computador</div>
<div class="t " style="left:522px;top:826.62px;font-size:15.8px;line-height:15.8px;color:#222;font-weight:400;">MacBook Air</div>
<div class="t " style="left:688px;top:815.62px;font-size:15.8px;line-height:15.8px;color:#222;font-weight:400;">Computadores</div>
<div class="t " style="left:895px;top:815.62px;font-size:15.8px;line-height:15.8px;color:#222;font-weight:400;">Apple</div>
<div style="position:absolute;left:1087px;top:810.5px;width:112px;height:26px;background:#fcd88c;border-radius:8px;"></div>
<div class="t " style="left:1097.5px;top:816.82px;font-size:13.8px;line-height:13.8px;color:#a3431c;font-weight:400;">Mantenimiento</div>
<div class="t " style="left:1276.5px;top:815.62px;font-size:15.8px;line-height:15.8px;color:#3450a6;font-weight:400;">Arnaiz, Pedro</div>
<svg style="position:absolute;left:1771px;top:812px;" width="22" height="22" viewBox="0 0 22 22" fill="none"><g transform="translate(0 -0.25)"><path d="M8.7 5.3A7.7 7.7 0 0 0 8.4 18.6M8.5 14.2V18.6H4M13.7 17.5A7 7 0 0 0 14 5M13.7 9.7V5H18.4" stroke="#2f4ba8" stroke-width="1.5" stroke-linecap="round" stroke-linejoin="round"/></g></svg>
<svg style="position:absolute;left:1810px;top:812px;" width="22" height="22" viewBox="0 0 22 22" fill="none"><g transform="translate(0 -0.25)"><path d="M3.8 13.3A7 7 0 1 0 5.2 7.2M3.3 4.2V8.3H7.8" stroke="#2f4ba8" stroke-width="1.5" stroke-linecap="round" stroke-linejoin="round"/><path d="M10.6 7.8V11.1L13.6 14.4" stroke="#2f4ba8" stroke-width="1.5" stroke-linecap="round" stroke-linejoin="round"/></g></svg>
<svg style="position:absolute;left:1855px;top:812px;" width="10" height="22" viewBox="0 0 10 22" fill="none"><circle cx="5" cy="7.25" r="1.6" fill="#2f4ba8"/><circle cx="5" cy="12.55" r="1.6" fill="#2f4ba8"/><circle cx="5" cy="17.75" r="1.6" fill="#2f4ba8"/></svg>
<div style="position:absolute;left:0;top:0;width:1890px;height:68px;z-index:7;">
<div style="position:absolute;left:1245px;top:23px;width:136px;height:26px;background:#dce3f9;border-radius:8px;"></div>
<div class="t " style="left:1255.3px;top:28.97px;font-size:13.5px;line-height:13.5px;color:#3450a6;font-weight:400;">Prueba Gratuita</div>
<svg style="position:absolute;left:1356px;top:28px;" width="14" height="14" viewBox="0 0 14 14" fill="none"><circle cx="7" cy="7" r="5.6" stroke="#3450a6" stroke-width="1.2"/><path d="M7 6.2V10" stroke="#3450a6" stroke-width="1.4"/><circle cx="7" cy="4.3" r="0.8" fill="#3450a6"/></svg>
<svg style="position:absolute;left:1405px;top:24px;" width="19" height="19" viewBox="0 0 19 19" fill="none"><rect x="2.3" y="2.3" width="14.4" height="14.6" rx="1.2" stroke="#2f4ba8" stroke-width="1.7"/><path d="M10.3 2.3H14.6V9.3L12.45 7.6L10.3 9.3Z" fill="#2f4ba8"/></svg>
<svg style="position:absolute;left:1453px;top:23px;" width="22" height="22" viewBox="0 0 22 22" fill="none"><path d="M9.4 4.7Q12.100000000000001 9.7 17.1 12.4Q12.100000000000001 15.100000000000001 9.4 20.1Q6.7 15.100000000000001 1.7000000000000002 12.4Q6.7 9.7 9.4 4.7Z" fill="#3d89dc"/><path d="M9.4 12.4H17.1Q12.1 15.1 9.4 20.1Z" fill="#2a64b8" opacity="0.3"/><path d="M17 1.6Q18.1 3.9 20.4 5Q18.1 6.1 17 8.4Q15.9 6.1 13.6 5Q15.9 3.9 17 1.6Z" fill="#3d89dc"/></svg>
<svg style="position:absolute;left:1501px;top:24px;" width="24" height="19" viewBox="0 0 24 19" fill="none"><path d="M1 9.3C3.5 4.5 7.5 1.6 12 1.6C16.5 1.6 20.5 4.5 23 9.3C20.5 14.1 16.5 17 12 17C7.5 17 3.5 14.1 1 9.3Z" fill="#2f4ba8"/><circle cx="12" cy="9.3" r="4.1" stroke="#f5f6f8" stroke-width="1.8"/><circle cx="12" cy="9.3" r="2.4" fill="#2f4ba8"/></svg>
<svg style="position:absolute;left:1553px;top:24px;" width="20" height="20" viewBox="0 0 20 20" fill="none"><g transform="translate(10 9.9)"><path d="M2.02 -5.86 L1.87 -8.09 L-1.87 -8.09 L-2.02 -5.86 L-4.07 -4.68 L-6.07 -5.66 L-7.94 -2.43 L-6.09 -1.18 L-6.09 1.18 L-7.94 2.43 L-6.07 5.66 L-4.07 4.68 L-2.02 5.86 L-1.87 8.09 L1.87 8.09 L2.02 5.86 L4.07 4.68 L6.07 5.66 L7.94 2.43 L6.09 1.18 L6.09 -1.18 L7.94 -2.43 L6.07 -5.66 L4.07 -4.68Z" stroke="#2f4ba8" stroke-width="1.6" stroke-linejoin="round"/><circle r="2.7" fill="#2f4ba8"/></g></svg>
<svg style="position:absolute;left:1603px;top:24px;" width="20" height="22" viewBox="0 0 20 22" fill="none"><path d="M5 15.2V9.5C5 6 7.2 3.6 10 3.6C12.8 3.6 15 6 15 9.5V15.2M2.5 15.4H17.5" stroke="#3450a6" stroke-width="1.6" stroke-linecap="round"/><path d="M8.5 17.5H11.5L10 19Z" fill="#3450a6" stroke="#3450a6" stroke-width="1"/></svg>
<div style="position:absolute;left:1610px;top:14px;width:18px;height:22px;background:#fdd5c3;border-radius:50%;"></div>
<div class="t " style="left:1615.3px;top:19.19px;font-size:12.3px;line-height:12.3px;color:#b8331d;font-weight:400;">4</div>
<svg style="position:absolute;left:1651px;top:27px;" width="20" height="16" viewBox="0 0 20 16" fill="none"><path d="M2.5 5.2H6.5L11.5 2.5V11.5L6.5 8.8H2.5Z" stroke="#3450a6" stroke-width="1.6" stroke-linejoin="round"/><path d="M5 9V13.5" stroke="#3450a6" stroke-width="1.7"/><path d="M13.5 10.5L16 12.3" stroke="#3450a6" stroke-width="1.4" stroke-linecap="round"/></svg>
<div style="position:absolute;left:1660px;top:14px;width:24.5px;height:22px;background:#d2dca8;border-radius:11px;"></div>
<div class="t " style="left:1665.5px;top:19.19px;font-size:12.3px;line-height:12.3px;color:#1c1c1c;font-weight:700;">12</div>
<svg style="position:absolute;left:1701px;top:24px;" width="21" height="20" viewBox="0 0 21 20" fill="none"><circle cx="10.6" cy="9.8" r="8.3" stroke="#3450a6" stroke-width="1.5"/><path d="M8 7.6C8 6.1 9.1 5.1 10.6 5.1C12.1 5.1 13.2 6.1 13.2 7.4C13.2 9.3 10.6 9.3 10.6 11.5" stroke="#3450a6" stroke-width="1.5" stroke-linecap="round"/><circle cx="10.6" cy="14.2" r="1" fill="#3450a6"/></svg>
<div style="position:absolute;left:1749px;top:11px;width:45px;height:45px;border-radius:50%;box-sizing:border-box;border:1.5px solid #fff;box-shadow:0 0.5px 2px rgba(0,0,0,0.35);background:#dbe3f8;overflow:hidden;"><svg width="42" height="42" viewBox="0 0 42 42" style="position:absolute;left:0;top:0"><path d="M4 44C4 33 9 29.5 14 28.5H28C33 29.5 38 33 38 44Z" fill="#f0c08c"/><path d="M11.5 44V30C11.5 28.8 12.5 28.2 14 28.2C16 31 18.5 32.2 21 32.2C23.5 32.2 26 31 28 28.2C29.5 28.2 30.5 28.8 30.5 30V44Z" fill="#2f7fca"/><path d="M17.8 22H24V29.5C24 31 22.5 31.8 21 31.8C19.5 31.8 17.8 31 17.8 29.5Z" fill="#f0c08c"/><path d="M10.6 24.2C10 12 12.5 3.3 20.8 3.3C29.2 3.3 31.5 12 30.8 24.2C28.5 25 26.5 24.5 26.5 24.5V14H15V24.5C15 24.5 13 25 10.6 24.2Z" fill="#16204f"/><ellipse cx="20.8" cy="18.2" rx="6.6" ry="8.1" fill="#f0c08c"/><path d="M13.6 17C14 10 17 7.2 21.5 7.2C23 7.2 24 8.5 24.5 10C25.5 11 27.3 13 27.9 16L28.6 12C28 6.5 24.5 4.5 20.8 4.5C16 4.5 12.8 7.5 12.8 12.5Z" fill="#16204f"/><circle cx="18.4" cy="18.3" r="0.55" fill="#4a5a5a"/><circle cx="23.2" cy="18.3" r="0.55" fill="#4a5a5a"/><path d="M19.3 22.2C20.3 23 21.3 23 22.3 22.2" stroke="#fff" stroke-width="1"/></svg></div>
<div class="t " style="left:1803.5px;top:26.00px;font-size:15px;line-height:15px;color:#3450a6;font-weight:400;">Consuelo V...</div>
</div>
<div style="position:absolute;left:0;top:0;width:1890px;height:846px;z-index:9;pointer-events:none;">
<svg style="position:absolute;left:1818px;top:812px;" width="14" height="22" viewBox="0 0 14 22" fill="none"><path d="M5.5 4.8A7.8 7.8 0 0 1 5.5 18.5" stroke="#2f4ba8" stroke-width="1.6"/></svg>
<div style="position:absolute;left:1768px;top:795.8px;width:55.5px;height:55.5px;border-radius:50%;background:#304ca9;box-shadow:0 0 0 1.5px rgba(200,210,235,0.6),0 1px 4px rgba(0,0,0,0.15);"></div>
<svg style="position:absolute;left:1783px;top:815px;" width="28" height="24" viewBox="0 0 28 24" fill="none"><rect x="2" y="2.9" width="22.8" height="11.3" rx="5.65" fill="#fff"/><path d="M15.8 15.5H20.3V20Z" fill="#fff"/></svg>
<div style="position:absolute;left:1838.4px;top:807px;width:43.6px;height:50px;overflow:hidden;"><div style="position:absolute;left:0;top:0;width:51px;height:51px;border-radius:50%;background:#0d2552;"></div></div>
<svg style="position:absolute;left:1851px;top:819px;" width="22" height="24" viewBox="0 0 22 24" fill="none"><path d="M3.5 2.5H16.5C17.6 2.5 18.2 3.1 18.2 4.2V19.8L13.5 17.8H3.5C2.4 17.8 1.8 17.2 1.8 16.1V4.2C1.8 3.1 2.4 2.5 3.5 2.5Z" fill="#fff"/><path d="M4.8 13.3Q10 16.3 15.2 13.3" stroke="#0d2552" stroke-width="1.2" fill="none"/></svg>
<div style="position:absolute;left:1884px;top:816.5px;width:17px;height:17px;border-radius:50%;background:#c23a2c;"></div>
<svg style="position:absolute;left:100px;top:248px;" width="30" height="30" viewBox="0 0 30 30" fill="none"><path d="M9.5 7.5V23.5L13.4 19.8L16.5 25.8L19 24.6L16.2 18.8H20.8Z" fill="#fff" stroke="#000" stroke-width="1.1" stroke-linejoin="round"/></svg>
</div>
</body></html>
